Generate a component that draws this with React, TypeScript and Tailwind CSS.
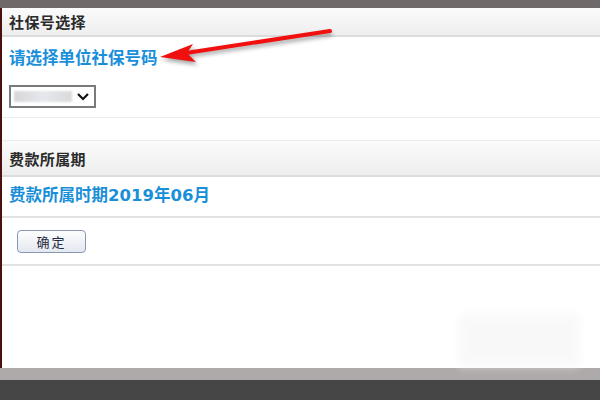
const cjk = { fontFamily: '"Noto Sans CJK SC", "Noto Sans", sans-serif' }
const mixed = { fontFamily: '"DejaVu Sans", "Noto Sans CJK SC", sans-serif' }

function SectionHeader({ title, tall }: { title: string; tall?: boolean }) {
  return (
    <div
      className={`${tall ? 'h-[36px]' : 'h-[29px]'} flex items-center px-[7px] bg-gradient-to-b from-[#fbfbfb] to-[#eeeeee] border-b-2 border-[#dcdcdc]`}
    >
      <span className="text-[15px] font-bold text-[#2b2b2b] leading-none tracking-[0.4px]">{title}</span>
    </div>
  )
}

function Arrow() {
  return (
    <svg className="absolute left-0 top-0 pointer-events-none" width="600" height="120" viewBox="0 0 600 120">
      <defs>
        <filter id="sh" x="-20%" y="-50%" width="140%" height="200%">
          <feGaussianBlur stdDeviation="2" />
        </filter>
      </defs>
      <g transform="translate(2,3)" filter="url(#sh)" opacity="0.45">
        <line x1="188" y1="52" x2="330" y2="31" stroke="#333" strokeWidth="4" />
        <polygon points="160,57 193,44 187,53 196,62" fill="#333" />
      </g>
      <line x1="186" y1="53" x2="330" y2="31" stroke="#f01010" strokeWidth="4" strokeLinecap="round" />
      <polygon points="160,57 193,44 187,53 196,62" fill="#f01010" />
    </svg>
  )
}

export default function App() {
  return (
    <div className="w-[600px] h-[400px] flex flex-col bg-white overflow-hidden relative" style={cjk}>
      <div className="h-[8px] bg-[#6f6a69]" />
      <div className="flex-1 flex flex-col border-l-2 border-[#4b0f0f] relative">
        <SectionHeader title="社保号选择" />
        <div className="h-[44px] flex items-center px-[7px]">
          <span className="text-[16.5px] font-bold text-[#1a8fd9] leading-none" style={mixed}>
            请选择单位社保号码
          </span>
        </div>
        <div className="px-[7px] pt-[4px] pb-[9px] border-b border-[#ececec]">
          <div className="w-[87px] h-[23px] border-2 border-[#7a7a7a] flex items-center justify-between pl-[3px] pr-[4px] bg-white">
            <div className="w-[58px] h-[11px] bg-gradient-to-r from-[#d6d6d6] via-[#e6e8ee] to-[#dadada] blur-[1px]" />
            <svg width="14" height="10" viewBox="0 0 14 10">
              <path d="M2 2 L7 7 L12 2" fill="none" stroke="#111" strokeWidth="2.2" />
            </svg>
          </div>
        </div>
        <div className="h-[23px] border-b border-[#ececec]" />
        <SectionHeader title="费款所属期" tall />
        <div className="h-[41px] flex items-center px-[7px] border-b-2 border-[#e2e2e2]">
          <span className="text-[16.5px] font-bold text-[#1a8fd9] leading-none" style={mixed}>
            费款所属时期2019年06月
          </span>
        </div>
        <div className="h-[48px] border-b-2 border-[#e2e2e2] flex items-center px-[15px]">
          <button className="w-[69px] h-[23px] rounded-[4px] border border-[#8797b4] bg-gradient-to-b from-[#fdfdfd] to-[#e4e8f0] text-[13px] text-[#1f2a44] tracking-[2px] leading-none">
            确定
          </button>
        </div>
        <div className="flex-1 relative">
          <div className="absolute left-[457px] top-[48px] w-[120px] h-[52px] bg-[#f6f6f6] blur-[5px] opacity-70" />
        </div>
      </div>
      <div className="h-[12px] bg-[#aeaaa9]" />
      <div className="h-[20px] bg-[#464646]" />
      <Arrow />
    </div>
  )
}
